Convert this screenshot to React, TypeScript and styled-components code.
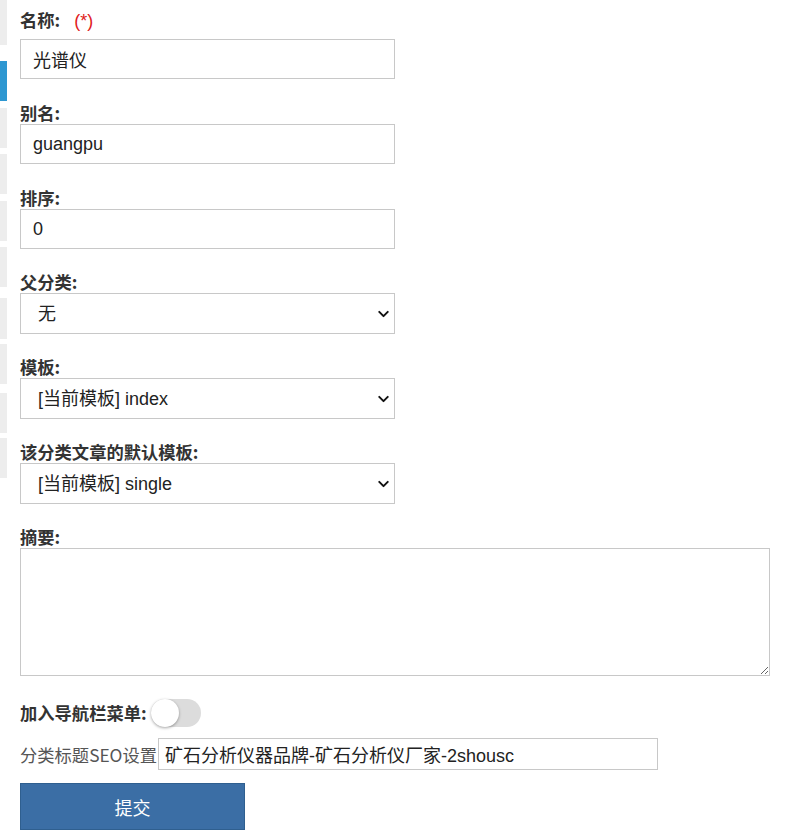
import React, { useState } from 'react';
import styled, { createGlobalStyle } from 'styled-components';
import { ChevronDown } from 'lucide-react';

const GlobalStyle = createGlobalStyle`
  html, body {
    margin: 0;
    padding: 0;
    background: #fff;
  }
  body {
    font-family: "Liberation Sans", "Noto Sans CJK SC", sans-serif;
    color: #333;
  }
`;

const Page = styled.div`
  display: flex;
  align-items: flex-start;
`;

const SideMenu = styled.div`
  width: 7px;
  display: flex;
  flex-direction: column;
  flex-shrink: 0;
`;

const MenuItem = styled.div<{ $active?: boolean; $h: number; $mt: number }>`
  height: ${p => p.$h}px;
  margin-top: ${p => p.$mt}px;
  background: ${p => (p.$active ? '#2e97d1' : '#ededed')};
`;

const Form = styled.form`
  padding: 9px 0 0 13px;
  display: flex;
  flex-direction: column;
`;

const Field = styled.div<{ $mb?: number }>`
  display: flex;
  flex-direction: column;
  margin-bottom: ${p => p.$mb ?? 23}px;
`;

const Label = styled.label<{ $gap?: number }>`
  display: block;
  height: 22px;
  line-height: 22px;
  margin-bottom: ${p => p.$gap || 0}px;
  font-family: "Noto Sans CJK SC", sans-serif;
  font-weight: 700;
  font-size: 17.3px;
  color: #333;
  white-space: nowrap;
`;

const Required = styled.span`
  color: #e02020;
  font-weight: 400;
  font-size: 18px;
  margin-left: 14px;
  font-family: "Liberation Sans", sans-serif;
`;

const TextInput = styled.input`
  box-sizing: border-box;
  width: 375px;
  height: 40px;
  border: 1px solid #c8c8c8;
  padding: 0 12px;
  font-family: "Liberation Sans", "Noto Sans CJK SC", sans-serif;
  font-size: 18px;
  color: #222;
  outline: none;
  background: #fff;
`;

const SelectWrap = styled.div`
  position: relative;
  width: 375px;
`;

const Select = styled.select`
  box-sizing: border-box;
  display: block;
  width: 375px;
  height: 41px;
  border: 1px solid #c8c8c8;
  padding: 0 30px 0 17px;
  font-family: "Liberation Sans", "Noto Sans CJK SC", sans-serif;
  font-size: 18px;
  color: #222;
  background: #fff;
  appearance: none;
  outline: none;
`;

const Caret = styled(ChevronDown)`
  position: absolute;
  right: 3px;
  top: 50%;
  transform: translateY(-50%);
  pointer-events: none;
  color: #111;
`;

const TextArea = styled.textarea`
  box-sizing: border-box;
  display: block;
  width: 750px;
  height: 128px;
  border: 1px solid #c8c8c8;
  outline: none;
  resize: both;
  font-family: "Liberation Sans", "Noto Sans CJK SC", sans-serif;
  font-size: 16px;
`;

const InlineRow = styled.div<{ $mb: number }>`
  display: flex;
  align-items: center;
  margin-bottom: ${p => p.$mb}px;
`;

const ToggleTrack = styled.button<{ $on: boolean }>`
  position: relative;
  width: 50px;
  height: 28px;
  margin-left: 4px;
  padding: 0;
  border: none;
  border-radius: 14px;
  background: ${p => (p.$on ? '#3b6ea5' : '#dcdcdc')};
  cursor: pointer;
`;

const ToggleKnob = styled.span<{ $on: boolean }>`
  position: absolute;
  top: 0;
  left: ${p => (p.$on ? '22px' : '0')};
  width: 28px;
  height: 28px;
  border-radius: 50%;
  background: #fff;
  box-shadow: 0 1px 3px rgba(0, 0, 0, 0.35);
`;

const SeoLabel = styled.span`
  font-family: "Noto Sans CJK SC", sans-serif;
  font-size: 17.3px;
  color: #555;
  white-space: nowrap;
  width: 138px;
`;

const SeoInput = styled.input`
  box-sizing: border-box;
  width: 500px;
  height: 32px;
  border: 1px solid #c8c8c8;
  padding: 0 6px;
  font-family: "Liberation Sans", "Noto Sans CJK SC", sans-serif;
  font-size: 18px;
  color: #222;
  outline: none;
`;

const SubmitButton = styled.button`
  width: 225px;
  height: 47px;
  border: 1px solid #2f5f8f;
  background: #3b6ea5;
  color: #fff;
  font-family: "Noto Sans CJK SC", sans-serif;
  font-size: 18px;
  cursor: pointer;
`;

const menu = [
  { h: 45, mt: 0 },
  { h: 40, mt: 16, active: true },
  { h: 40, mt: 7 },
  { h: 40, mt: 6 },
  { h: 40, mt: 7 },
  { h: 40, mt: 6 },
  { h: 41, mt: 11 },
  { h: 40, mt: 5 },
  { h: 40, mt: 9 },
  { h: 40, mt: 5 },
];

export default function App() {
  const [nav, setNav] = useState(false);
  return (
    <Page>
      <GlobalStyle />
      <SideMenu>
        {menu.map((m, i) => (
          <MenuItem key={i} $h={m.h} $mt={m.mt} $active={m.active} />
        ))}
      </SideMenu>
      <Form onSubmit={e => e.preventDefault()}>
        <Field>
          <Label $gap={8}>
            名称:<Required>(*)</Required>
          </Label>
          <TextInput defaultValue="光谱仪" />
        </Field>
        <Field>
          <Label>别名:</Label>
          <TextInput defaultValue="guangpu" />
        </Field>
        <Field $mb={22}>
          <Label>排序:</Label>
          <TextInput defaultValue="0" />
        </Field>
        <Field $mb={22}>
          <Label>父分类:</Label>
          <SelectWrap>
            <Select defaultValue="0">
              <option value="0">无</option>
            </Select>
            <Caret size={17} strokeWidth={2.8} />
          </SelectWrap>
        </Field>
        <Field $mb={22}>
          <Label>模板:</Label>
          <SelectWrap>
            <Select defaultValue="index">
              <option value="index">[当前模板] index</option>
            </Select>
            <Caret size={17} strokeWidth={2.8} />
          </SelectWrap>
        </Field>
        <Field $mb={22}>
          <Label>该分类文章的默认模板:</Label>
          <SelectWrap>
            <Select defaultValue="single">
              <option value="single">[当前模板] single</option>
            </Select>
            <Caret size={17} strokeWidth={2.8} />
          </SelectWrap>
        </Field>
        <Field>
          <Label>摘要:</Label>
          <TextArea />
        </Field>
        <InlineRow $mb={11}>
          <Label as="span">加入导航栏菜单:</Label>
          <ToggleTrack type="button" $on={nav} onClick={() => setNav(!nav)}>
            <ToggleKnob $on={nav} />
          </ToggleTrack>
        </InlineRow>
        <InlineRow $mb={13}>
          <SeoLabel>分类标题SEO设置</SeoLabel>
          <SeoInput defaultValue="矿石分析仪器品牌-矿石分析仪厂家-2shousc" />
        </InlineRow>
        <div>
          <SubmitButton type="submit">提交</SubmitButton>
        </div>
      </Form>
    </Page>
  );
}
